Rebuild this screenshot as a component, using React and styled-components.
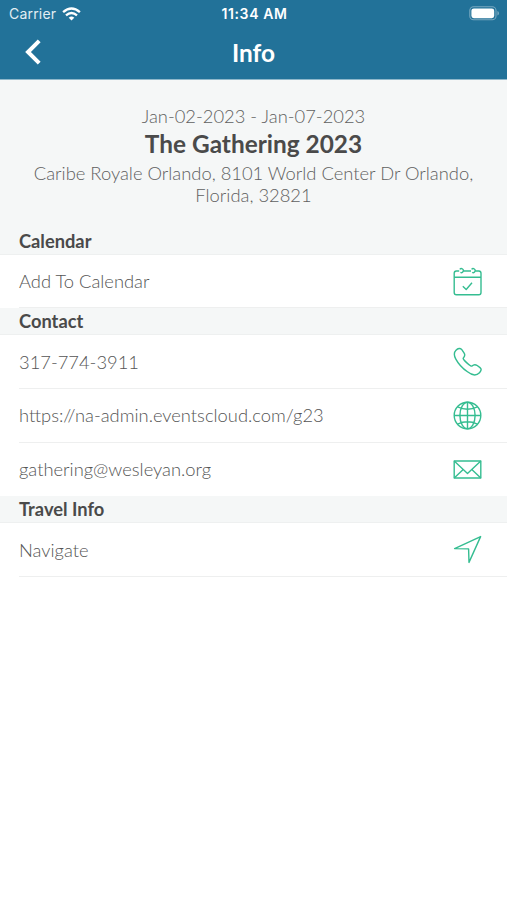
import React from "react";
import styled, { createGlobalStyle } from "styled-components";

const sections = [
	{
		title: "Calendar",
		height: 27,
		items: [{ text: "Add To Calendar", icon: "calendar", height: 53 }],
	},
	{
		title: "Contact",
		height: 27,
		items: [
			{ text: "317-774-3911", icon: "phone", height: 54 },
			{ text: "https://na-admin.eventscloud.com/g23", icon: "globe", height: 54, lift: 1 },
			{ text: "gathering@wesleyan.org", icon: "mail", height: 53, lift: 1, last: true },
		],
	},
	{
		title: "Travel Info",
		height: 27,
		items: [{ text: "Navigate", icon: "navigate", height: 54 }],
	},
];

const icons = {
	calendar: (
		<>
			<path d="M6.2 4H3.4Q1.2 4 1.2 6.2V25.6Q1.2 27.8 3.4 27.8H25.8Q28 27.8 28 25.6V6.2Q28 4 25.8 4H22.4M10.6 4H18M1.2 10.2H28" />
			<path d="M6.8 2.4A2 2 0 1 1 7.4 5.4M18.6 2.4A2 2 0 1 1 19.2 5.4" />
			<path d="M9.8 19.3L13.2 22.5L19 15.8" />
		</>
	),
	phone: (
		<path d="M3 3.2C5 1.2 7.2.8 8.8 2.6L11 5.9C12.5 8.1 12 9.4 10.2 11.2C9.3 12.1 18 20.1 19 19.1C20.7 17.3 22.2 17.1 24.2 18.5L27 20.6C28.8 22 28.3 23.8 26.5 25.7C23.5 28.8 18.8 28.2 14.5 24.8C9.8 21.5 5.3 16.7 2.7 11.8C.8 8.2.8 5.4 3 3.2Z" />
	),
	globe: (
		<>
			<circle cx="14.5" cy="14.5" r="13.3" />
			<ellipse cx="14.5" cy="14.5" rx="7.6" ry="13.3" />
			<path d="M14.5 1.2V27.8M1.2 14.5H27.8M4.6 5.8Q14.5 10.6 24.4 5.8M4.6 23.2Q14.5 18.4 24.4 23.2" />
		</>
	),
	mail: (
		<>
			<rect x="1.2" y="6" width="26.6" height="17" />
			<path d="M1.2 6L14.5 18.4L27.8 6M1.2 23L10.2 14.5M27.8 23L18.8 14.5" />
		</>
	),
	navigate: <path d="M1.6 13.6L27.6 1.6L16 27.4L15.6 13.9Z" />,
};

export const InfoPage = () => {
	return (
		<StyledPage>
			<StyledHeader>
				<StyledStatusBar>
					<StyledCarrier>
						Carrier
						<svg width="19" height="14" viewBox="0 0 19 14" fill="#fff">
							<path d="M9.5 13.6L6.7 10.7Q9.5 8.4 12.3 10.7Z" />
							<g fill="none" stroke="#fff" strokeWidth="2.4">
								<path d="M1.1 5.1Q9.5-2.1 17.9 5.1" />
								<path d="M4 8.3Q9.5 3.6 15 8.3" />
							</g>
						</svg>
					</StyledCarrier>
					<StyledTime>11:34 AM</StyledTime>
					<StyledBattery>
						<svg width="31" height="15" viewBox="0 0 31 15">
							<rect x=".8" y=".8" width="26.2" height="13" rx="3.8" fill="none" stroke="#78a8c0" strokeWidth="1.1" />
							<rect x="2.4" y="2.4" width="22.8" height="9.8" rx="2.4" fill="#fff" />
							<path d="M28.4 5V9.6Q30 9 30 7.3Q30 5.6 28.4 5Z" fill="#78a8c0" />
						</svg>
					</StyledBattery>
				</StyledStatusBar>
				<StyledNavBar>
					<StyledBackBtn aria-label="Back">
						<svg width="18" height="26" viewBox="0 0 18 26" fill="none" stroke="#fff" strokeWidth="4">
							<path d="M15.2 1.8L4 13L15.2 24.2" />
						</svg>
					</StyledBackBtn>
					<StyledNavTitle>Info</StyledNavTitle>
					<span />
				</StyledNavBar>
			</StyledHeader>
			<StyledEvent>
				<StyledEventText>Jan-02-2023 - Jan-07-2023</StyledEventText>
				<StyledEventName>The Gathering 2023</StyledEventName>
				<StyledEventText>
					Caribe Royale Orlando, 8101 World Center Dr Orlando,
					<br />
					Florida, 32821
				</StyledEventText>
			</StyledEvent>
			{sections.map((section) => (
				<section key={section.title}>
					<StyledSectionTitle $height={section.height}>{section.title}</StyledSectionTitle>
					{section.items.map((item) => (
						<StyledRow key={item.text} $height={item.height} $last={item.last}>
							<StyledRowText $lift={item.lift}>{item.text}</StyledRowText>
							<StyledIcon viewBox="0 0 29 29">{icons[item.icon]}</StyledIcon>
						</StyledRow>
					))}
				</section>
			))}
		</StyledPage>
	);
};

const GlobalStyle = createGlobalStyle`
	* {
		box-sizing: border-box;
	}
	body {
		margin: 0;
		background: #fff;
	}
`;

const StyledPage = styled.main`
	min-height: 900px;
	background: #fff;
	font-family: "Lato", sans-serif;
	color: #4a4a4a;
`;

const StyledHeader = styled.header`
	height: 80px;
	background: #227299;
	border-bottom: 1px solid #8fb8cb;
	color: #fff;
`;

const StyledStatusBar = styled.div`
	display: grid;
	grid-template-columns: 1fr auto 1fr;
	align-items: center;
	height: 27px;
	padding: 0 7px 0 9px;
	font-family: "Inter", sans-serif;
	font-size: 14px;
	line-height: 20px;
`;

const StyledCarrier = styled.div`
	display: flex;
	align-items: center;
	gap: 6px;
	color: #e3eef3;
	letter-spacing: 0.2px;
`;

const StyledTime = styled.div`
	font-weight: 600;
	letter-spacing: 0.6px;
`;

const StyledBattery = styled.div`
	display: flex;
	justify-content: flex-end;
`;

const StyledNavBar = styled.div`
	display: grid;
	grid-template-columns: 1fr auto 1fr;
	align-items: center;
	height: 50px;
	padding: 0 24px;
`;

const StyledBackBtn = styled.button`
	display: flex;
	width: 18px;
	padding: 0;
	border: 0;
	background: none;
`;

const StyledNavTitle = styled.h1`
	margin: 2px 0 0;
	font-size: 24.4px;
	line-height: 30px;
	font-weight: 700;
`;

const StyledEvent = styled.div`
	height: 148px;
	padding-top: 25px;
	background: #f5f7f7;
	text-align: center;
`;

const StyledEventText = styled.p`
	margin: 0;
	font-size: 18.37px;
	line-height: 22px;
	font-weight: 300;
	color: #606060;
`;

const StyledEventName = styled.h2`
	margin: 0;
	padding: 2px 0 3px;
	font-size: 24.4px;
	line-height: 30px;
	font-weight: 700;
`;

const StyledSectionTitle = styled.h3`
	display: flex;
	align-items: center;
	height: ${({ $height }) => $height}px;
	margin: 0;
	padding-left: 19px;
	border-bottom: 1px solid #eef0f0;
	background: #f5f7f7;
	font-size: 18.3px;
	line-height: 22px;
	font-weight: 700;
`;

const StyledRow = styled.div`
	display: flex;
	justify-content: space-between;
	align-items: center;
	height: ${({ $height }) => $height}px;
	margin-left: 19px;
	padding-right: 25px;
	border-bottom: ${({ $last }) => ($last ? "0" : "1px solid #eeefef")};
`;

const StyledRowText = styled.span`
	padding-bottom: ${({ $lift }) => ($lift ? 2 : 0)}px;
	font-size: 18.35px;
	line-height: 22px;
	font-weight: 300;
	color: #555;
`;

const StyledIcon = styled.svg`
	width: 29px;
	height: 29px;
	fill: none;
	stroke: #35bd91;
	stroke-width: 1.4;
	stroke-linejoin: round;
`;

export default function App() {
	return (
		<>
			<GlobalStyle />
			<InfoPage />
		</>
	);
}
